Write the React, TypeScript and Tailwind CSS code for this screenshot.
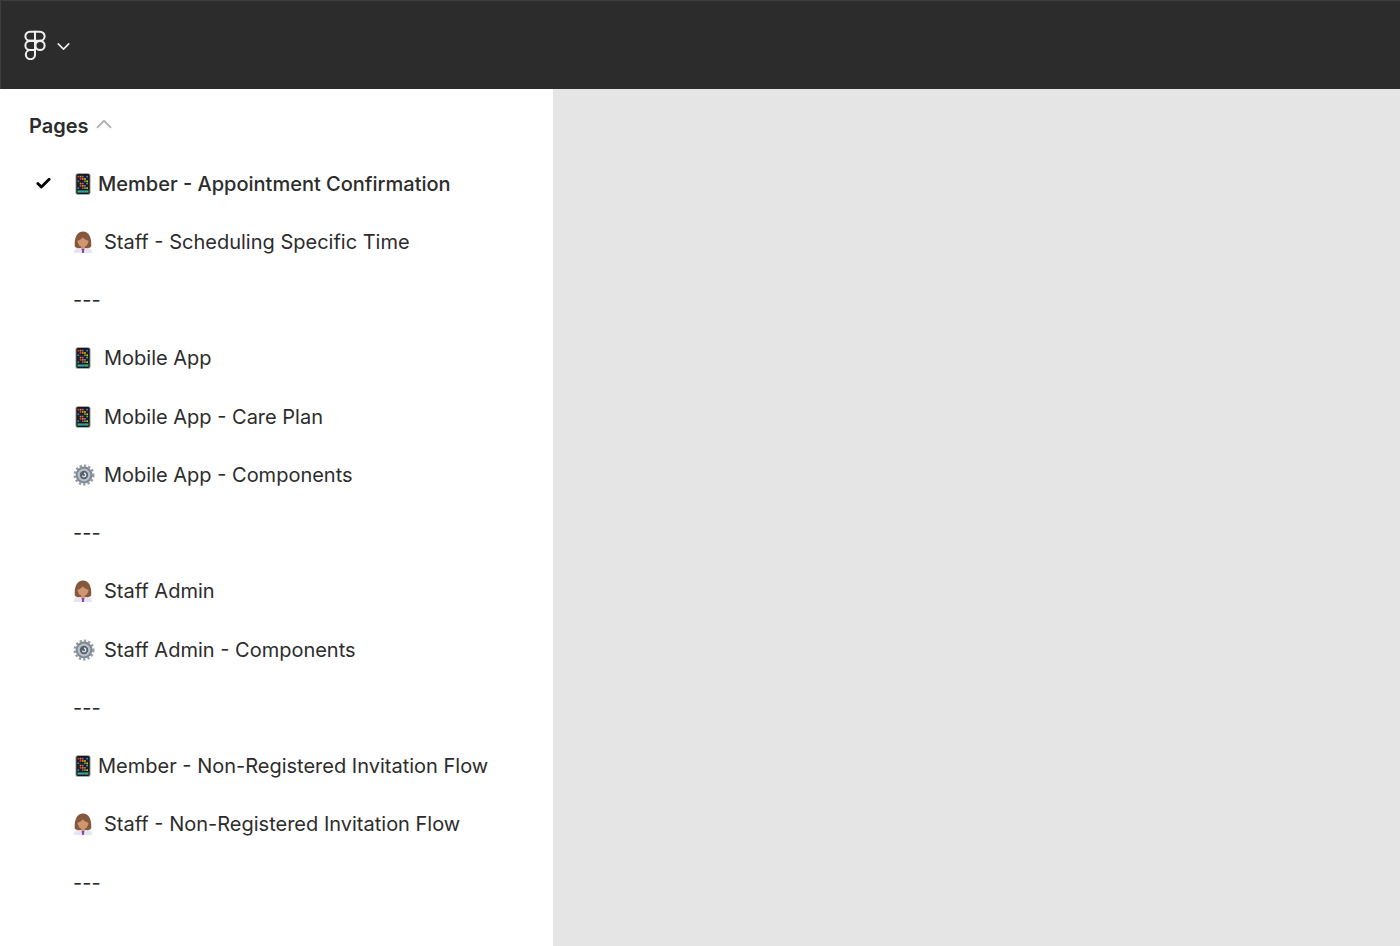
import { Check, ChevronDown, ChevronUp } from "lucide-react";

type Emoji = "phone" | "staff" | "gear" | null;

interface PageRow {
  emoji: Emoji;
  label: string;
  tight?: boolean;
  active?: boolean;
}

const pages: PageRow[] = [
  { emoji: "phone", label: "Member - Appointment Confirmation", tight: true, active: true },
  { emoji: "staff", label: "Staff - Scheduling Specific Time" },
  { emoji: null, label: "---" },
  { emoji: "phone", label: "Mobile App" },
  { emoji: "phone", label: "Mobile App - Care Plan" },
  { emoji: "gear", label: "Mobile App - Components" },
  { emoji: null, label: "---" },
  { emoji: "staff", label: "Staff Admin" },
  { emoji: "gear", label: "Staff Admin - Components" },
  { emoji: null, label: "---" },
  { emoji: "phone", label: "Member - Non-Registered Invitation Flow", tight: true },
  { emoji: "staff", label: "Staff - Non-Registered Invitation Flow" },
  { emoji: null, label: "---" },
];

function FigmaLogo() {
  return (
    <svg width="22" height="30" viewBox="0 0 24 32" fill="none" stroke="#f0f0f0" strokeWidth="2.2">
      <path d="M12 1.5H6.5a5 5 0 0 0 0 10H12z" />
      <path d="M12 1.5h5.5a5 5 0 0 1 0 10H12z" />
      <path d="M12 11.5H6.5a5 5 0 0 0 0 10H12z" />
      <circle cx="17.5" cy="16.5" r="5" />
      <path d="M6.5 21.5H12v5a5 5 0 1 1-5.5-5z" />
    </svg>
  );
}

function PhoneEmoji() {
  const colors = ["#d8443a", "#20242c", "#2f8fd8", "#20242c", "#e8b62f", "#3fbf5c", "#20242c", "#b45cc8", "#e88a1c"];
  const cells = Array.from({ length: 30 }, (_, i) => colors[(i * 5 + (i % 4) * 3) % 9]);
  return (
    <svg width="20" height="22" viewBox="0 0 20 22">
      <rect x="2.5" y="0.2" width="15" height="21.6" rx="2.6" fill="#8f9296" />
      <rect x="3.4" y="1.1" width="13.2" height="19.8" rx="1.6" fill="#15171c" />
      {cells.map((c, i) => (
        <rect key={i} x={4.5 + (i % 5) * 2.2} y={2.8 + Math.floor(i / 5) * 2.3} width="1.7" height="1.7" fill={c} />
      ))}
      <rect x="4.5" y="17.4" width="3.6" height="2.2" fill="#35b56a" />
      <rect x="8.1" y="17.4" width="3.6" height="2.2" fill="#2f9fd8" />
      <rect x="11.7" y="17.4" width="3.8" height="2.2" fill="#35b56a" />
    </svg>
  );
}

function StaffEmoji() {
  return (
    <svg width="20" height="22" viewBox="0 0 20 22">
      <path d="M0.8 22c0-3.8 3.2-6 9.2-6s9.2 2.2 9.2 6z" fill="#e4e6ee" />
      <path d="M1.8 15.600C1 6.400 4.400 0.600 10 0.600s9 5.800 8.200 15c-1.200 1.400-3.400 1.800-5.200 1.400H7c-1.800.4-4 0-5.200-1.400z" fill="#85583e" />
      <ellipse cx="10" cy="10.200" rx="5.400" ry="5.800" fill="#cf9670" />
      <path d="M4.400 9.800c2-.4 4.200-1.800 5.400-3.600 1.200 1.800 3.600 3.200 5.800 3.600-.1-3.200-2.400-5.800-5.600-5.800s-5.500 2.600-5.600 5.800z" fill="#85583e" />
      <path d="M8.200 15h3.600v2.400L10 19.200l-1.800-1.800z" fill="#cf9670" />
      <path d="M8.600 18h2.800l-.5 4H9.100z" fill="#8e3fb0" />
    </svg>
  );
}

function GearEmoji() {
  return (
    <svg width="22" height="22" viewBox="0 0 22 22">
      <circle cx="11" cy="11" r="8.400" fill="#7d8791" />
      <circle cx="11" cy="11" r="9.200" fill="none" stroke="#939ca5" strokeWidth="2.600" strokeDasharray="2.300 2" />
      <circle cx="11" cy="11" r="6.400" fill="#b9c0c7" />
      <circle cx="11" cy="11" r="4.200" fill="#56616c" />
      <path d="M11 8.600a2.400 2.400 0 1 1-2.300 3h1.300a1.100 1.100 0 1 0 1-1.700z" fill="#e8eaec" />
    </svg>
  );
}

function RowEmoji({ kind }: { kind: Emoji }) {
  if (kind === "phone") return <PhoneEmoji />;
  if (kind === "staff") return <StaffEmoji />;
  if (kind === "gear") return <GearEmoji />;
  return null;
}

export default function App() {
  return (
    <div className="h-[946px] w-[1400px] overflow-hidden flex flex-col font-['Inter',sans-serif] text-[#2c2c2c]">
      <header className="h-[89px] shrink-0 bg-[#2c2c2c] border-t border-l border-[#3d3d3d] flex items-center pl-[23px] gap-[7px]">
        <FigmaLogo />
        <ChevronDown className="w-[21px] h-[21px] text-[#f0f0f0] mt-[3px]" strokeWidth={1.8} />
      </header>

      <div className="flex flex-1 min-h-0">
        <aside className="w-[553px] shrink-0 bg-white">
          <div className="h-[73px] pl-[29px] flex items-center gap-[2px]">
            <span className="text-[20px] font-semibold">Pages</span>
            <ChevronUp className="w-[26px] h-[26px] text-[#b3b3b3] -mt-[3px]" strokeWidth={1.7} />
          </div>
          <ul className="-mt-[7.5px]">
            {pages.map((page, i) => (
              <li key={i} className="h-[58.25px] flex items-center">
                <span className="w-[73px] pl-[35px] shrink-0">
                  {page.active && <Check className="w-[17px] h-[17px] text-black" strokeWidth={4} />}
                </span>
                {page.emoji && (
                  <span className={page.tight ? "w-[25px] shrink-0 flex" : "w-[31px] shrink-0 flex"}>
                    <RowEmoji kind={page.emoji} />
                  </span>
                )}
                <span className={page.active ? "text-[20px] font-medium whitespace-pre" : "text-[20px] whitespace-pre"}>
                  {page.label}
                </span>
              </li>
            ))}
          </ul>
        </aside>
        <main className="flex-1 bg-[#e5e5e5]" />
      </div>
    </div>
  );
}
